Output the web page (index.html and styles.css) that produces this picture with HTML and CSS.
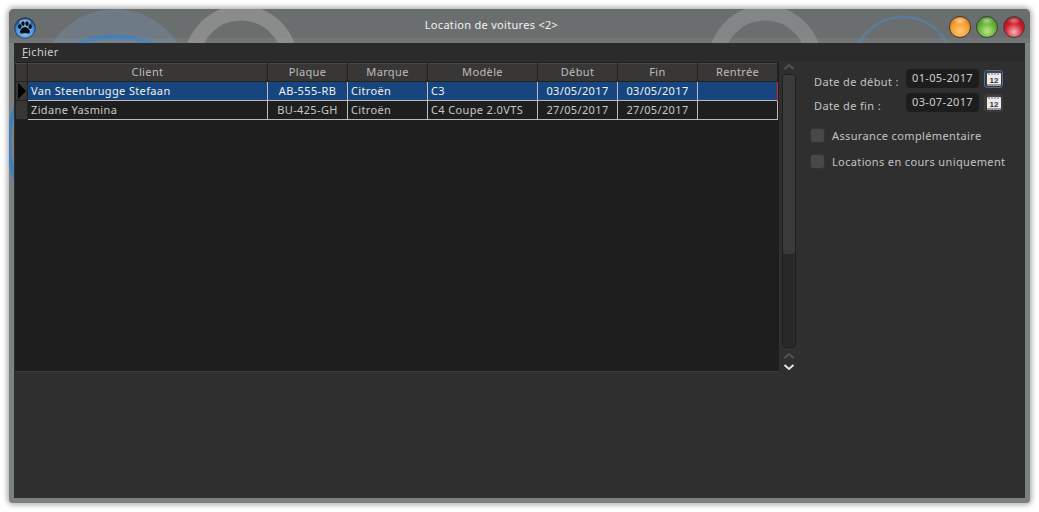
FILE: index.html
```html
<!DOCTYPE html>
<html lang="fr">
<head>
<meta charset="utf-8">
<title>Location de voitures</title>
<link rel="stylesheet" href="styles.css">
</head>
<body>
<div class="window">
  <svg class="rings" width="1021" height="494" viewBox="0 0 1021 494">
    <circle cx="106" cy="75" r="75" fill="#6f8494" fill-opacity=".6"/>
    <circle cx="106" cy="134" r="100" fill="#8b9092" fill-opacity=".45"/>
    <circle cx="106" cy="134" r="106" fill="none" stroke="#3f7fbe" stroke-width="4"/>
    <circle cx="232" cy="53" r="49" fill="none" stroke="#8a8c8c" stroke-width="15"/>
    <circle cx="756" cy="53" r="49" fill="none" stroke="#838686" stroke-width="15"/>
    <circle cx="894" cy="58" r="50" fill="none" stroke="#5a7d9c" stroke-width="2.500"/>
    <path d="M0 31.500H1021" stroke="#a0a3a3" stroke-opacity=".16" stroke-width="5"/>
  </svg>
  <header class="titlebar">
    <svg class="paw" width="22" height="22" viewBox="0 0 22 22">
      <defs>
        <radialGradient id="pawBg" cx=".5" cy=".65" r=".6"><stop offset="0" stop-color="#a9d8fb"/><stop offset=".7" stop-color="#3f8fe0"/><stop offset="1" stop-color="#1b3f78"/></radialGradient>
      </defs>
      <circle cx="11" cy="11" r="10.300" fill="url(#pawBg)" stroke="#23344c" stroke-width=".7"/>
      <ellipse cx="11" cy="4.800" rx="5.500" ry="2.600" fill="#fff" fill-opacity=".45"/>
      <ellipse cx="5.800" cy="9.600" rx="1.700" ry="2.300" fill="#0b0b12"/>
      <ellipse cx="9" cy="6.600" rx="1.700" ry="2.400" fill="#0b0b12"/>
      <ellipse cx="13" cy="6.600" rx="1.700" ry="2.400" fill="#0b0b12"/>
      <ellipse cx="16.200" cy="9.600" rx="1.700" ry="2.300" fill="#0b0b12"/>
      <path d="M11 10c2.600 0 5 3 5 5 0 1.600-1.600 1.800-2.700 1.500-1.500-.4-3.100-.4-4.600 0C7.600 16.800 6 16.600 6 15c0-2 2.400-5 5-5z" fill="#0b0b12"/>
    </svg>
    <span class="title">Location de voitures &lt;2&gt;</span>
    <div class="lights">
      <span class="light orange"></span>
      <span class="light green"></span>
      <span class="light red"></span>
    </div>
  </header>
  <div class="client">
    <nav class="menubar"><span class="menu-item"><u>F</u>ichier</span></nav>
    <main class="main">
      <section class="grid-panel">
        <table class="grid">
          <colgroup>
            <col class="c-ind"><col class="c-client"><col class="c-80"><col class="c-80"><col class="c-modele"><col class="c-80"><col class="c-80"><col class="c-80">
          </colgroup>
          <thead>
            <tr>
              <th class="corner"></th><th>Client</th><th>Plaque</th><th>Marque</th><th>Modèle</th><th>Début</th><th>Fin</th><th>Rentrée</th>
            </tr>
          </thead>
          <tbody>
            <tr class="selected">
              <td class="ind"><span class="arrow"></span></td>
              <td>Van Steenbrugge Stefaan</td><td class="mid">AB-555-RB</td><td>Citroën</td><td>C3</td><td class="mid">03/05/2017</td><td class="mid">03/05/2017</td><td></td>
            </tr>
            <tr>
              <td class="ind"></td>
              <td>Zidane Yasmina</td><td class="mid">BU-425-GH</td><td>Citroën</td><td>C4 Coupe 2.0VTS</td><td class="mid">27/05/2017</td><td class="mid">27/05/2017</td><td></td>
            </tr>
          </tbody>
        </table>
      </section>
      <div class="scrollbar">
        <svg class="chev" width="12" height="8" viewBox="0 0 12 8"><path d="M1.500 6L6 2l4.500 4" fill="none" stroke="#545454" stroke-width="2"/></svg>
        <div class="scroll-track"><div class="scroll-thumb"></div></div>
        <svg class="chev" width="12" height="8" viewBox="0 0 12 8"><path d="M1.500 6L6 2l4.500 4" fill="none" stroke="#545454" stroke-width="2"/></svg>
        <svg class="chev down" width="12" height="8" viewBox="0 0 12 8"><path d="M1.500 2L6 6l4.500-4" fill="none" stroke="#e4e4e4" stroke-width="2"/></svg>
      </div>
      <aside class="side">
        <div class="date-row">
          <label class="date-label">Date de début :</label>
          <span class="date-field">01-05-2017</span>
          <button class="cal focus">
            <svg width="16" height="15" viewBox="0 0 16 15">
              <rect x="1" y="2" width="14" height="12.500" rx="1" fill="#ececec"/>
              <path d="M3 .5v3.500M6 .5v3.500M9 .5v3.500M12 .5v3.500" stroke="#666" stroke-width="1"/>
              <path d="M1 13h14v1.500H1z" fill="#9a9a9a"/>
              <text class="cal-num" x="8" y="11.500" text-anchor="middle">12</text>
            </svg>
          </button>
        </div>
        <div class="date-row">
          <label class="date-label">Date de fin :</label>
          <span class="date-field">03-07-2017</span>
          <button class="cal">
            <svg width="16" height="15" viewBox="0 0 16 15">
              <rect x="1" y="2" width="14" height="12.500" rx="1" fill="#ececec"/>
              <path d="M3 .5v3.500M6 .5v3.500M9 .5v3.500M12 .5v3.500" stroke="#666" stroke-width="1"/>
              <path d="M1 13h14v1.500H1z" fill="#9a9a9a"/>
              <text class="cal-num" x="8" y="11.500" text-anchor="middle">12</text>
            </svg>
          </button>
        </div>
        <label class="check first"><span class="box"></span>Assurance complémentaire</label>
        <label class="check"><span class="box"></span>Locations en cours uniquement</label>
      </aside>
    </main>
  </div>
</div>
</body>
</html>
```
FILE: styles.css
```css
* { box-sizing: border-box; }
html, body { margin: 0; height: 100%; background: #fff; overflow: hidden; }
body { padding: 9px; font-family: "Noto Sans", "Open Sans", sans-serif; font-size: 11px; letter-spacing: .36px; color: #c8c8c8; }
.window { position: relative; width: 1021px; height: 494px; display: flex; flex-direction: column; padding: 0 5px 5px; background: #7b8181; border-radius: 5px 5px 4px 4px; box-shadow: 0 0 5px 2px rgba(60,60,60,.4); overflow: hidden; }
.window::before { content: ""; position: absolute; inset: 0 0 auto; height: 34px; background: #6b6e6e; }
.rings { position: absolute; left: 0; top: 0; }
.titlebar { position: relative; flex: none; height: 34px; display: flex; align-items: center; justify-content: center; padding-right: 56px; }
.paw { position: absolute; left: 0; top: 8px; }
.title { color: #f2f2f2; font-size: 11px; letter-spacing: .3px; margin-top: -4px; }
.lights { position: absolute; right: 0; top: 7px; display: flex; gap: 5px; }
.light { width: 22px; height: 22px; border-radius: 50%; border: 1px solid #3e3e3e; }
.orange { background: radial-gradient(ellipse 7px 4px at 50% 18%, rgba(255,255,255,.55), transparent), radial-gradient(circle at 50% 70%, #ffc678 0, #f69a28 55%, #c9741b 100%); }
.green { background: radial-gradient(ellipse 7px 4px at 50% 18%, rgba(255,255,255,.5), transparent), radial-gradient(circle at 50% 70%, #b8e88a 0, #5eaa2e 55%, #37791c 100%); }
.red { background: radial-gradient(ellipse 7px 4px at 50% 18%, rgba(255,255,255,.45), transparent), radial-gradient(circle at 50% 75%, #f7b6bc 0, #cf1a26 50%, #8a0f17 100%); }
.client { position: relative; flex: 1; min-height: 0; background: #2f2f2f; display: flex; flex-direction: column; }
.menubar { flex: none; height: 18px; background: #2b2b2b; padding-left: 8px; line-height: 17px; color: #cfcfcf; }
.main { flex: 1; min-height: 0; display: flex; align-items: flex-start; padding: 1px 0 0 1px; }
.grid-panel { flex: none; width: 764px; height: 310px; background: #1e1e1e; border-bottom: 1px solid #3a3a3a; padding: 1px 1px 1px 0; }
.grid { border-collapse: collapse; table-layout: fixed; width: 762px; margin-left: 0; }
.c-ind { width: 12px; }
.c-client { width: 240px; }
.c-80 { width: 80px; }
.c-modele { width: 110px; }
.grid th { height: 18px; padding: 0 0 2px; font-weight: 400; background: #383736; border: 1px solid #222; color: #bdbdbd; border-top-color: #4a4a4a; }
.grid td { height: 19px; padding: 0 3px 2px; border: 1px solid #bcbcbc; white-space: nowrap; overflow: hidden; color: #c8c8c8; }
.grid td.mid { text-align: center; }
.grid td.ind { padding: 0; background: #383736; border: 1px solid #222; }
.arrow { display: block; margin-left: 2px; width: 0; height: 0; border-left: 8px solid #000; border-top: 8px solid transparent; border-bottom: 8px solid transparent; }
.selected td { background: #17467f; color: #f0f0f0; border-top: 1px dotted #e0303c; border-bottom: 1px dotted #e0303c; }
.selected td:last-child { border-right: 1px solid #e0202c; }
.selected td.ind { background: #383736; }
.scrollbar { flex: none; width: 14px; margin-left: 3px; display: flex; flex-direction: column; align-items: center; }
.chev { flex: none; display: block; }
.scrollbar > .chev:first-child { margin-top: 1px; }
.scroll-track { flex: none; width: 14px; height: 274px; margin: 3px 0 4px; border-radius: 4px; background: #282828; border: 1px solid #1f1f1f; }
.scroll-thumb { height: 179px; background: #3b3b3a; border-radius: 3px; }
.chev.down { margin-top: 3px; }
.side { flex: 1; display: flex; flex-direction: column; padding: 7px 0 0 14px; }
.date-row { position: relative; display: flex; align-items: center; height: 19px; margin-bottom: 5px; }
.date-label { width: 96px; padding: 5px 0 0 4px; color: #c4c4c4; white-space: nowrap; }
.date-field { width: 73px; height: 19px; line-height: 18px; background: #1d1d1d; border-radius: 4px; text-align: center; color: #cfcfcf; }
.cal { width: 19px; height: 18px; margin-left: 5px; padding: 0; display: flex; align-items: center; justify-content: center; background: #3b3b3b; border: 1px solid #3b3b3b; border-radius: 3px; }
.cal.focus { border-color: #4a6d9c; }
.cal-num { font-family: "Liberation Sans", sans-serif; font-size: 8px; font-weight: 700; letter-spacing: 0; fill: #333; }
.check { display: flex; align-items: center; height: 16px; margin-bottom: 10px; color: #c4c4c4; white-space: nowrap; }
.check.first { margin-top: 10px; }
.box { flex: none; width: 15px; height: 15px; margin-right: 7px; background: #484848; border: 1px solid #333; border-radius: 3px; }
```
